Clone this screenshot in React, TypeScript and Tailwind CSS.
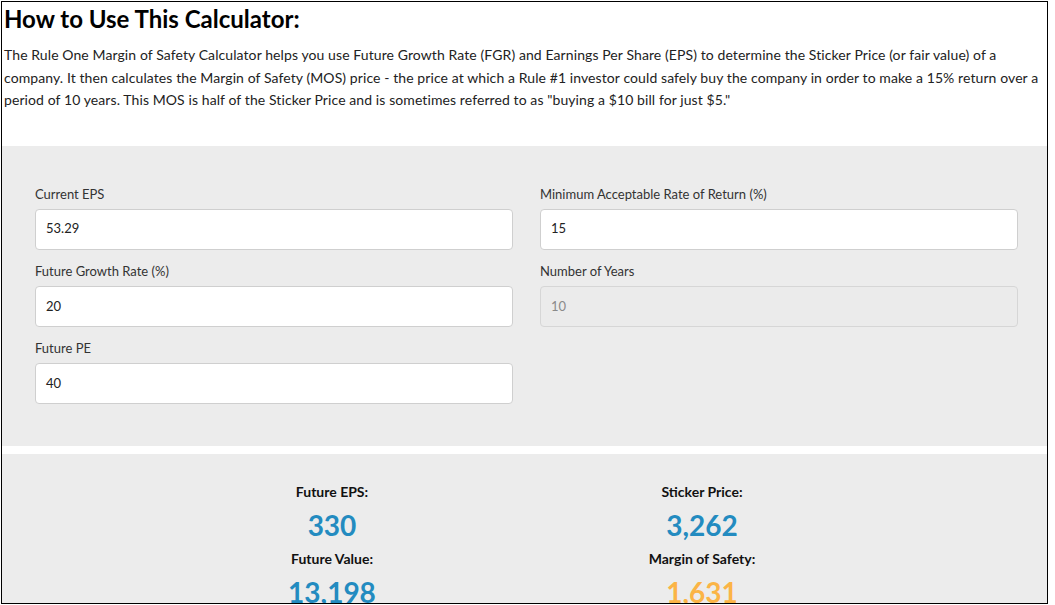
import React from "react";

function Field({ label, value, disabled }: { label: string; value: string; disabled?: boolean }) {
  return (
    <div className="mb-[11.3px] flex flex-col">
      <label className="mb-[5px] h-[20px] text-[13px] leading-[20px] text-[#333]">{label}</label>
      <div
        className={
          disabled
            ? "flex h-[41px] items-center rounded-[4px] border border-[#d6d6d6] bg-[#ebebeb] pl-[10px] text-[13px] text-[#8a8a8a]"
            : "flex h-[41px] items-center rounded-[4px] border border-[#cfcfcf] bg-white pl-[10px] text-[13px] text-[#222]"
        }
      >
        {value}
      </div>
    </div>
  );
}

function Result({ label, value, color, first }: { label: string; value: string; color: string; first?: boolean }) {
  return (
    <div className="flex flex-col items-center">
      <div className={(first ? "" : "mt-[6px] ") + "h-[20px] text-[14px] font-bold leading-[20px] text-[#111]"}>{label}</div>
      <div className={"mt-[5px] h-[36px] text-[28px] font-bold leading-[36px] " + color}>{value}</div>
    </div>
  );
}

export default function App() {
  return (
    <div className="bg-white p-px" style={{ fontFamily: "Lato, 'Open Sans', sans-serif" }}>
      <div className="flex h-[603px] w-[1047px] flex-col overflow-hidden border border-black bg-white">
        <div className="px-[2px]">
          <h1 className="pt-[2px] text-[24px] font-bold leading-[29px] text-black">How to Use This Calculator:</h1>
          <p className="mt-[11px] pr-[4px] text-[14px] leading-[22.5px] tracking-[0.09px] text-[#222]">
            The Rule One Margin of Safety Calculator helps you use Future Growth Rate (FGR) and Earnings Per Share (EPS) to determine the Sticker Price (or fair value) of a company. It then calculates the Margin of Safety (MOS) price - the price at which a Rule #1 investor could safely buy the company in order to make a 15% return over a period of 10 years. This MOS is half of the Sticker Price and is sometimes referred to as "buying a $10 bill for just $5."
          </p>
        </div>
        <div className="mt-[34px] flex gap-[27px] bg-[#ececec] pb-[31px] pl-[33px] pr-[28px] pt-[38px]">
          <div className="flex w-[478px] flex-col">
            <Field label="Current EPS" value="53.29" />
            <Field label="Future Growth Rate (%)" value="20" />
            <Field label="Future PE" value="40" />
          </div>
          <div className="flex w-[478px] flex-col">
            <Field label="Minimum Acceptable Rate of Return (%)" value="15" />
            <Field label="Number of Years" value="10" disabled />
          </div>
        </div>
        <div className="mt-[8px] flex-1 bg-[#ececec] pt-[28px]">
          <div className="ml-[145px] grid w-[740px] grid-cols-2">
            <div className="flex flex-col items-center">
              <Result label="Future EPS:" value="330" color="text-[#238bc0]" first />
              <Result label="Future Value:" value="13,198" color="text-[#238bc0]" />
            </div>
            <div className="flex flex-col items-center">
              <Result label="Sticker Price:" value="3,262" color="text-[#238bc0]" first />
              <Result label="Margin of Safety:" value="1,631" color="text-[#fbb446]" />
            </div>
          </div>
        </div>
      </div>
    </div>
  );
}
